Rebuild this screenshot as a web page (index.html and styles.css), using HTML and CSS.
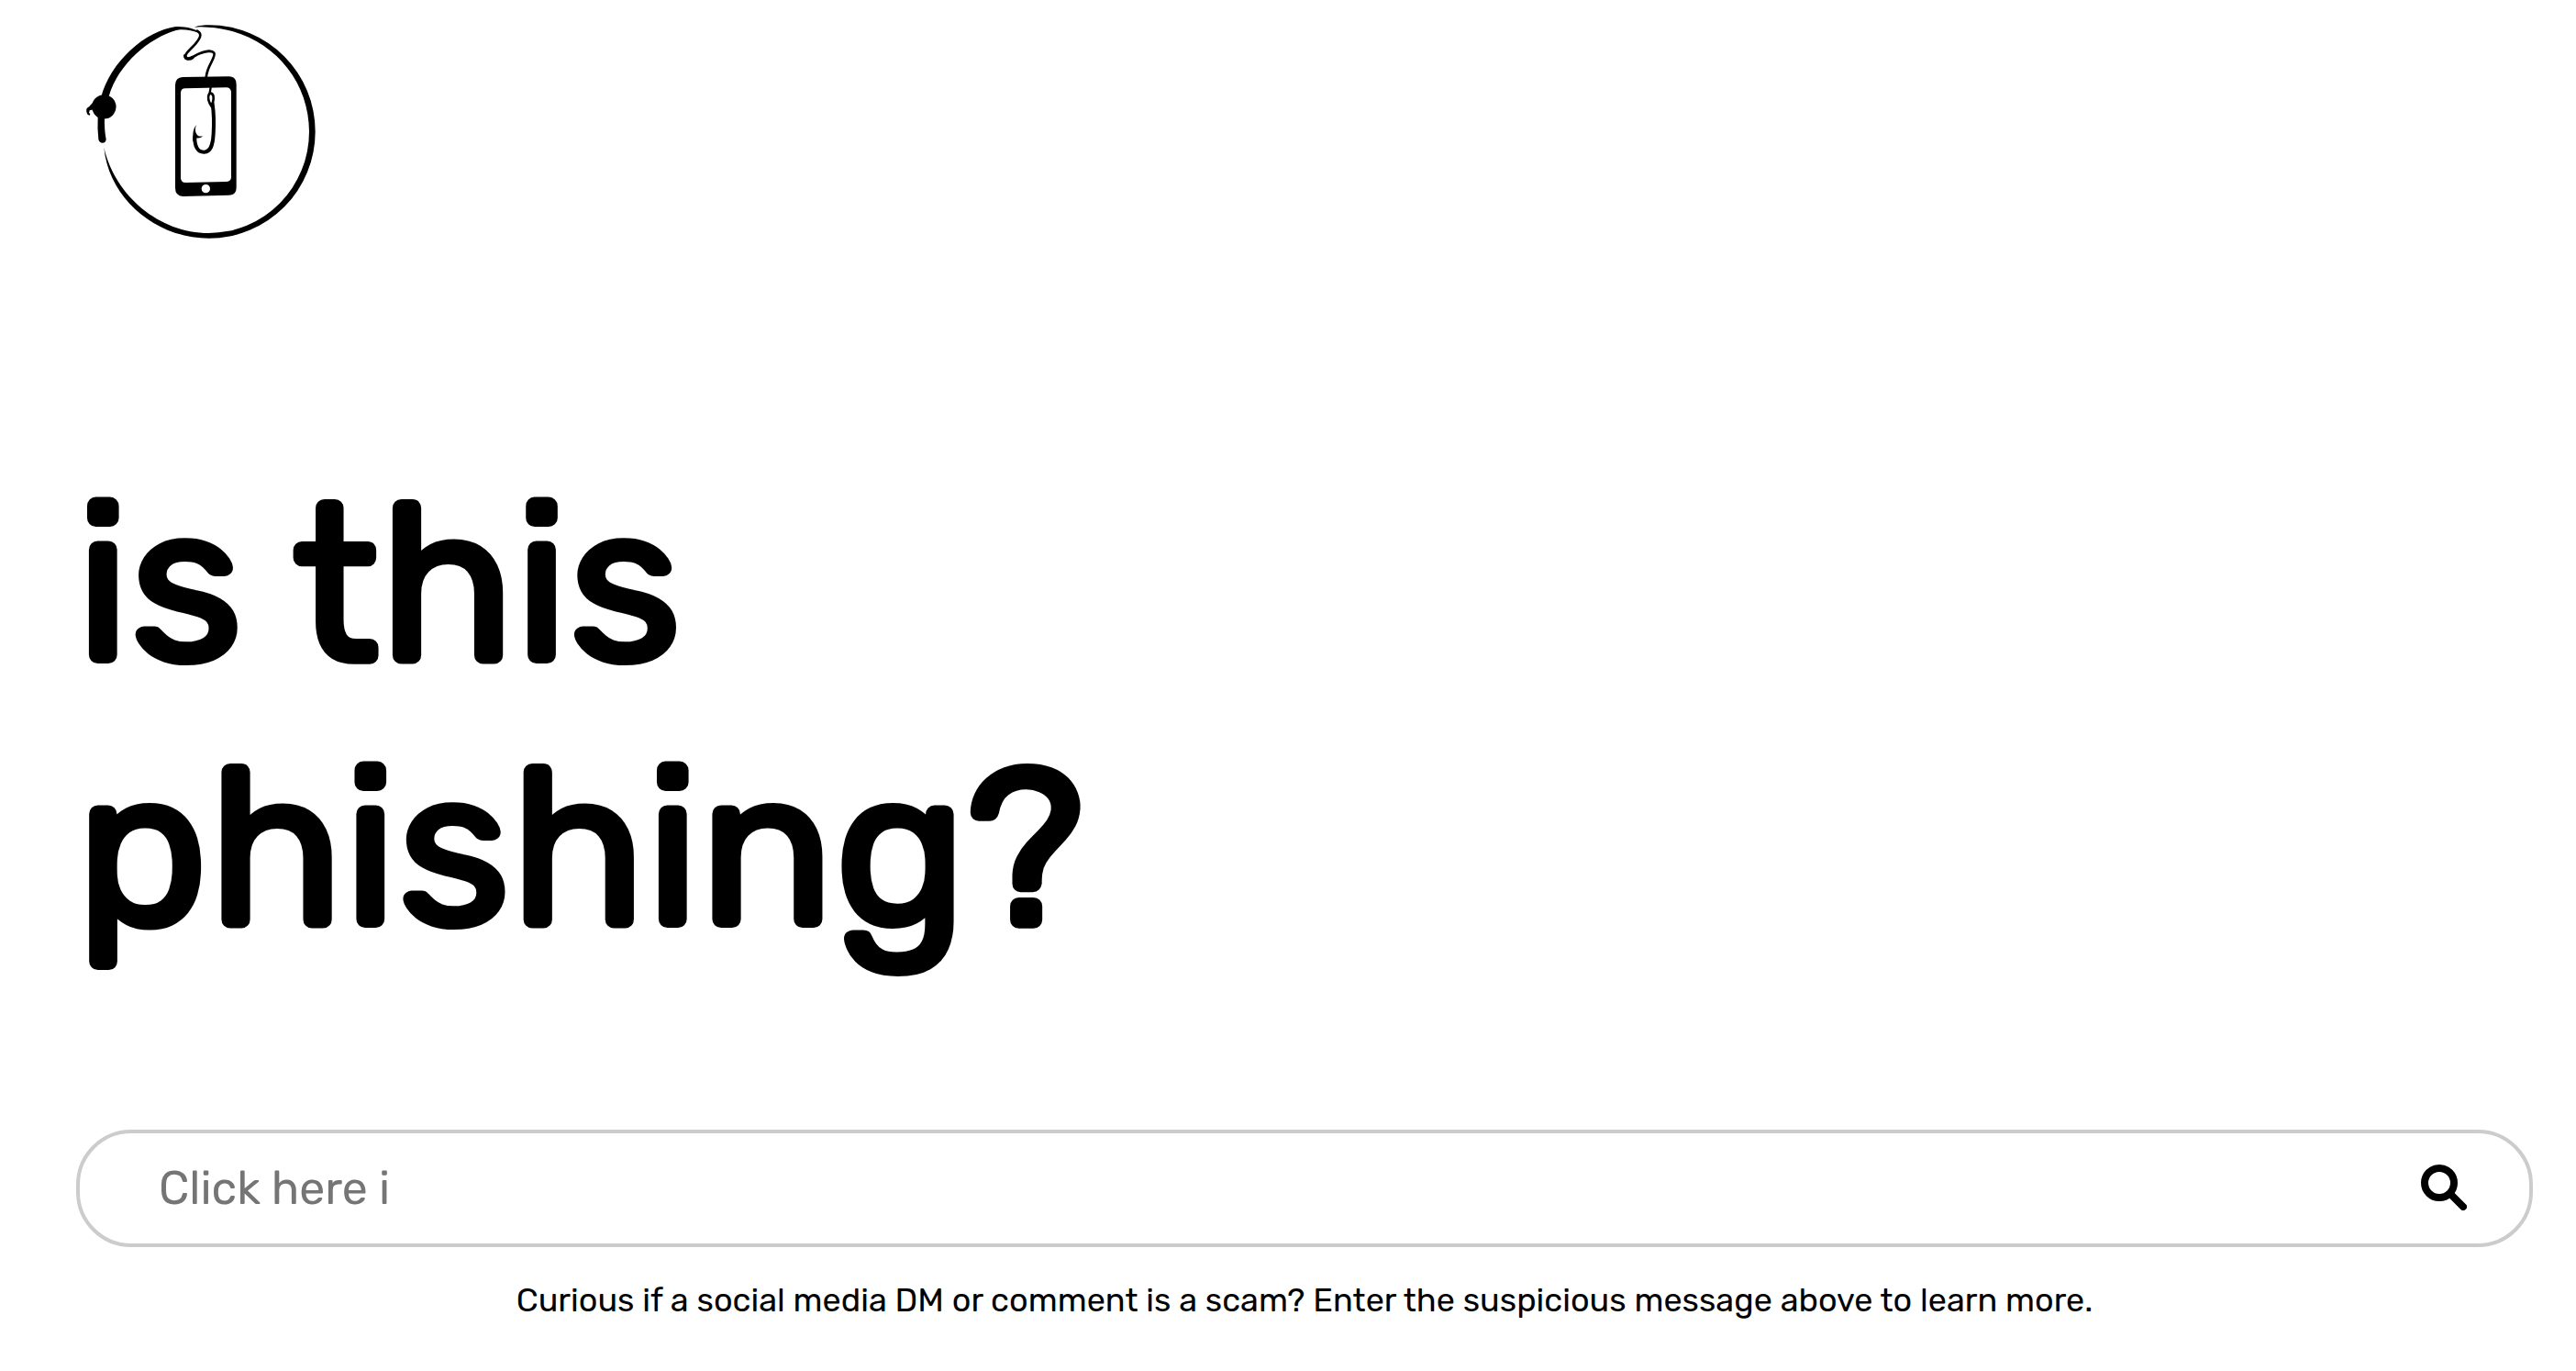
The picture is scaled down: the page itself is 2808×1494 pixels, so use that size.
FILE: index.html
```html
<!DOCTYPE html>
<html lang="en">
<head>
<meta charset="utf-8">
<title>is this phishing?</title>
<meta name="viewport" content="width=device-width, initial-scale=1">
<link rel="stylesheet" href="styles.css">
</head>
<body>
<header class="header">
  <a class="logo-link" href="#" aria-label="Home">
    <svg class="logo" viewBox="0 0 840 780" aria-hidden="true">
      <path d="M395 59C412 53 428 52 445 52A347 348 0 0 1 791 400A348 348 0 0 1 443 749C274 749 116 622 100 452C136 610 282 732 443 732A329 332 0 0 0 771 400C771 215 625 68 440 59Q415 57 395 59Z"/>
      <path d="M90 290C120 172 236 70 335 57C365 55 396 64 416 75L412 79C386 67 352 64 336 69C250 94 148 176 116 285Z"/>
      <circle cx="100" cy="319" r="39.500"/>
      <path d="M80 350H102C101 380 103 405 107 425Q106 437 95 437Q84 436 82 425Q78 390 80 350Z"/>
      <path d="M66 304C58 309 56 317 44 324Q40 334 47 345L54 347Q57 342 51 338L53 331L66 328Z"/>
      <g class="line">
        <path stroke-width="8" d="M405 71C424 82 413 96 397 116C373 140 361 151 368 160C378 167 393 153 413 145C432 137 453 134 460 143C466 153 448 174 440 198Q435 212 434 224"/>
        <path stroke-width="10" d="M365 152C366 166 382 164 390 158"/>
        <path stroke-width="7" d="M449 256L446 273"/>
        <path stroke-width="8" d="M449 275C459 277 460 290 456 306L452 318C443 304 439 288 443 279Q445 275 449 275Z"/>
        <path stroke-width="12" d="M455 310C460 345 460 375 458 407C456 447 448 466 428 467C407 468 396 449 397 417"/>
      </g>
      <path d="M403 378C396 389 398 405 407 413Q414 418 424 414Q415 424 401 421L397 432L391 432C391 406 390 392 403 378Z"/>
      <path fill-rule="evenodd" d="M357 222L508 220Q533 220 533 246V582Q533 608 508 608L358 612Q333 610 333 584V248Q334 223 357 222ZM366 259Q351 259 351 275V552Q352 567 367 567L501 564Q516 562 516 548V270Q514 256 500 256ZM433 573A14 14 0 1 0 433 601A14 14 0 1 0 433 573Z"/>
    </svg>
  </a>
</header>
<main class="main">
  <h1 class="title">is this<br>phishing?</h1>
  <form class="search">
    <input class="search-input" type="text" aria-label="Suspicious message" placeholder="Click here i">
    <button class="search-button" type="button" aria-label="Search">
      <svg class="search-icon" viewBox="0 0 50 50" aria-hidden="true">
        <circle cx="20" cy="20" r="16"/>
        <path d="M32 32L46 46"/>
      </svg>
    </button>
  </form>
  <p class="hint">Curious if a social media DM or comment is a scam? Enter the suspicious message above to learn more.</p>
</main>
</body>
</html>
```
FILE: styles.css
```css
* {
  box-sizing: border-box;
}

body {
  margin: 0;
  padding: 10px 47px 0 83px;
  background: #fff;
  color: #000;
  font-family: Rubik, Roboto, sans-serif;
}

.header {
  display: flex;
}

.logo-link {
  display: block;
  margin-left: -3px;
  color: inherit;
}

.logo {
  display: block;
  width: 280px;
  height: 260px;
}

.line {
  fill: none;
  stroke: #000;
  stroke-linecap: round;
  stroke-linejoin: round;
}

.title {
  margin: 223px 0 0;
  font-size: 242px;
  line-height: 288px;
  font-weight: 400;
  -webkit-text-stroke: 8px #000;
}

.search {
  display: flex;
  align-items: center;
  height: 128px;
  margin-top: 162px;
  padding: 0 68px 0 86px;
  border: 4px solid #ccc;
  border-radius: 60px;
}

.search-input {
  flex: 1;
  min-width: 0;
  padding: 0;
  border: 0;
  outline: 0;
  background: none;
  color: #000;
  font-family: inherit;
  font-size: 50px;
  line-height: 60px;
}

.search-input::placeholder {
  color: #757575;
  opacity: 1;
}

.search-button {
  padding: 0 0 2px;
  border: 0;
  background: none;
  color: #000;
}

.search-icon {
  display: block;
  width: 50px;
  height: 50px;
  fill: none;
  stroke: currentColor;
  stroke-width: 8;
  stroke-linecap: round;
}

.hint {
  margin: 36px 0 0;
  font-size: 36px;
  line-height: 44px;
  text-align: center;
}
```
